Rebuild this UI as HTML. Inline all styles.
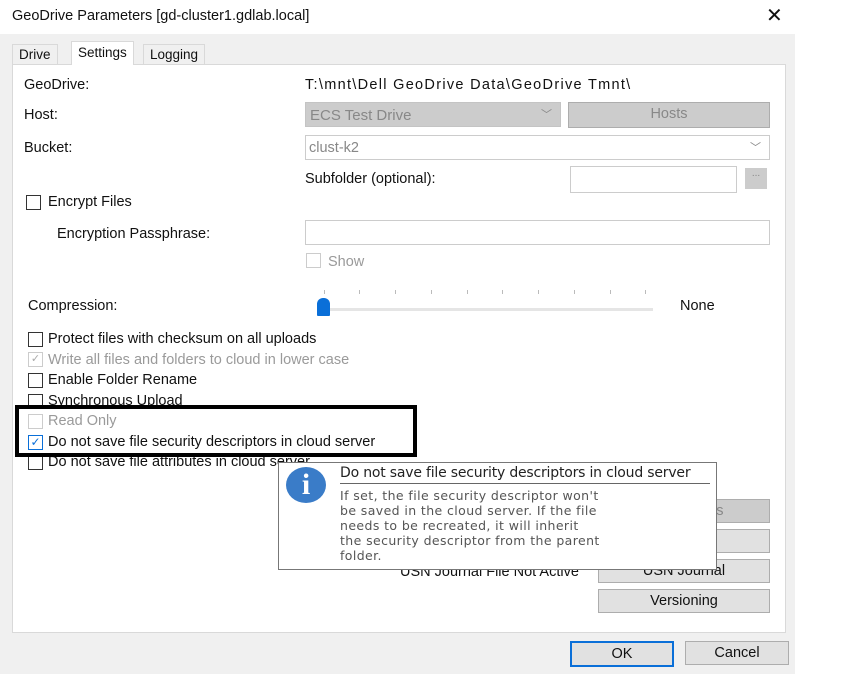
<!DOCTYPE html>
<html><head><style>
body{margin:0;width:865px;height:652px;background:#fff;position:relative;overflow:hidden;font-family:"Liberation Sans",sans-serif;font-size:14.5px;color:#111}
.a{position:absolute;white-space:nowrap}
.dlg{left:0;top:34px;width:795px;height:640px;background:#f0f0f0}
.panel{left:12px;top:64px;width:772px;height:567px;background:#fff;border:1px solid #d9d9d9}
.tab{top:44px;height:19px;border:1px solid #d9d9d9;border-bottom:none;background:#f0f0f0;padding:0 6px;line-height:20px;font-size:13.5px}
.cb{width:13px;height:13px;border:1px solid #333;background:#fff}
.btn{background:#e1e1e1;border:1px solid #adadad;text-align:center;line-height:22px}
.dis{color:#9a9a9a}
.tk{position:absolute;top:290px;width:1px;height:4px;background:#bbb}
</style></head><body>
<div class="a" style="left:12px;top:8px;font-size:14.5px">GeoDrive Parameters [gd-cluster1.gdlab.local]</div>
<div class="a" style="left:766px;top:3px;font-size:20px">✕</div>
<div class="a dlg"></div>
<div class="a panel"></div>
<div class="a tab" style="left:12px">Drive</div>
<div class="a tab" style="left:71px;top:41px;height:23px;background:#fff;line-height:22px">Settings</div>
<div class="a tab" style="left:143px">Logging</div>

<div class="a" style="left:24px;top:77px">GeoDrive:</div>
<div class="a" style="left:305px;top:77px;letter-spacing:1.3px">T:\mnt\Dell GeoDrive Data\GeoDrive Tmnt\</div>
<div class="a" style="left:24px;top:107px">Host:</div>
<div class="a" style="left:305px;top:102px;width:256px;height:25px;background:#ccc;border:1px solid #c4c4c4;color:#888;line-height:25px;padding-left:4px;box-sizing:border-box;font-size:15px">ECS Test Drive<span style="position:absolute;right:8px;font-size:11px">﹀</span></div>
<div class="a btn" style="left:568px;top:102px;width:200px;height:24px;background:#ccc;color:#888">Hosts</div>
<div class="a" style="left:24px;top:140px">Bucket:</div>
<div class="a" style="left:305px;top:135px;width:465px;height:25px;border:1px solid #ccc;color:#888;line-height:24px;padding-left:3px;box-sizing:border-box">clust-k2<span style="position:absolute;right:8px;font-size:11px">﹀</span></div>
<div class="a" style="left:305px;top:171px">Subfolder (optional):</div>
<div class="a" style="left:570px;top:166px;width:165px;height:25px;border:1px solid #ccc"></div>
<div class="a" style="left:745px;top:168px;width:22px;height:21px;background:#ccc;color:#888;text-align:center;font-size:10px">...</div>
<div class="a cb" style="left:26px;top:195px"></div>
<div class="a" style="left:48px;top:194px;font-size:14.5px">Encrypt Files</div>
<div class="a" style="left:57px;top:226px">Encryption Passphrase:</div>
<div class="a" style="left:305px;top:220px;width:465px;height:25px;border:1px solid #ccc;box-sizing:border-box"></div>
<div class="a cb" style="left:306px;top:253px;border-color:#ccc"></div>
<div class="a dis" style="left:328px;top:254px">Show</div>
<div class="a" style="left:28px;top:298px">Compression:</div>
<div class="tk" style="left:324px"></div><div class="tk" style="left:359px"></div><div class="tk" style="left:395px"></div><div class="tk" style="left:431px"></div><div class="tk" style="left:467px"></div><div class="tk" style="left:502px"></div><div class="tk" style="left:538px"></div><div class="tk" style="left:574px"></div><div class="tk" style="left:610px"></div><div class="tk" style="left:645px"></div>
<div class="a" style="left:320px;top:308px;width:333px;height:3px;background:#e5e5e5"></div>
<div class="a" style="left:317px;top:298px;width:13px;height:18px;background:#0a6fd8;border-radius:6px 6px 1px 1px"></div>
<div class="a" style="left:680px;top:298px">None</div>

<div class="a cb" style="left:28px;top:332px"></div><div class="a" style="left:48px;top:331px">Protect files with checksum on all uploads</div>
<div class="a cb" style="left:28px;top:352px;border-color:#ccc;color:#aaa;font-size:11px;line-height:13px;text-align:center">✓</div><div class="a dis" style="left:48px;top:352px">Write all files and folders to cloud in lower case</div>
<div class="a cb" style="left:28px;top:373px"></div><div class="a" style="left:48px;top:372px">Enable Folder Rename</div>
<div class="a cb" style="left:28px;top:394px"></div><div class="a" style="left:48px;top:393px">Synchronous Upload</div>
<div class="a cb" style="left:28px;top:414px;border-color:#ccc"></div><div class="a dis" style="left:48px;top:413px">Read Only</div>
<div class="a cb" style="left:28px;top:435px;border-color:#0a6fd8;color:#0a6fd8;font-size:12px;line-height:13px;text-align:center">✓</div><div class="a" style="left:48px;top:434px">Do not save file security descriptors in cloud server</div>
<div class="a cb" style="left:28px;top:455px"></div><div class="a" style="left:48px;top:454px">Do not save file attributes in cloud server</div>
<div class="a" style="left:15px;top:405px;width:394px;height:44px;border:4px solid #000"></div>

<div class="a btn" style="left:598px;top:499px;width:170px;height:22px;background:#ccc;color:#888">Permissions</div>
<div class="a btn" style="left:598px;top:529px;width:170px;height:22px"></div>
<div class="a" style="left:400px;top:564px">USN Journal File Not Active</div>
<div class="a btn" style="left:598px;top:559px;width:170px;height:22px">USN Journal</div>
<div class="a btn" style="left:598px;top:589px;width:170px;height:22px">Versioning</div>
<div class="a btn" style="left:570px;top:641px;width:100px;height:22px;border:2px solid #0a6fd8">OK</div>
<div class="a btn" style="left:685px;top:641px;width:102px;height:22px">Cancel</div>

<div class="a" style="left:278px;top:462px;width:437px;height:106px;background:#fff;border:1px solid #777"></div>
<div class="a" style="left:286px;top:467px;width:40px;height:36px;border-radius:50%;background:#3a7cc8;color:#fff;text-align:center;font:bold 30px/36px 'Liberation Serif',serif">i</div>
<div class="a" style="left:340px;top:465px;font:14px 'DejaVu Sans',sans-serif;color:#222;border-bottom:1px solid #666;padding-bottom:2px;width:370px;letter-spacing:-0.2px">Do not save file security descriptors in cloud server</div>
<div class="a" style="left:340px;top:488px;font:12.5px/15px 'DejaVu Sans',sans-serif;color:#555;letter-spacing:0.4px">If set, the file security descriptor won't<br>be saved in the cloud server. If the file<br>needs to be recreated, it will inherit<br>the security descriptor from the parent<br>folder.</div>
</body></html>
